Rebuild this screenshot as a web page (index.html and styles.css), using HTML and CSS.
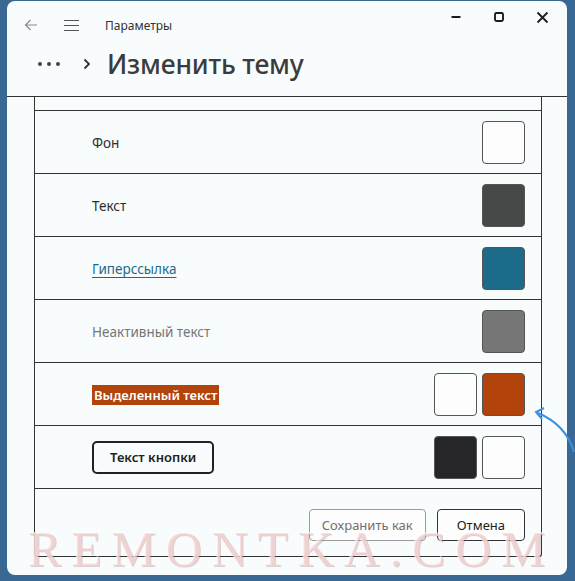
FILE: index.html
```html
<!DOCTYPE html>
<html lang="ru">
  <head>
    <meta charset="UTF-8" />
    <meta name="viewport" content="width=device-width, initial-scale=1.0" />
    <title>Параметры</title>
    <link rel="stylesheet" href="styles.css">
  </head>
  <body>
    <div class="window">
      <div class="titlebar">
        <div class="nav">
          <svg class="back" width="14" height="12" viewBox="0 0 14 12">
            <path d="M13 6H1.5M6.5 1L1.5 6l5 5" fill="none" stroke="#8a8a8a" stroke-width="1.2"/>
          </svg>
          <svg class="burger" width="15" height="11" viewBox="0 0 15 11">
            <path d="M0 .5h15M0 5.5h15M0 10.5h15" stroke="#555" stroke-width="1.1"/>
          </svg>
          <span class="app-name">Параметры</span>
        </div>
        <div class="controls">
          <svg width="12" height="12" viewBox="0 0 12 12">
            <path d="M1.5 6h9" stroke="#1c1c1c" stroke-width="2"/>
          </svg>
          <svg width="12" height="12" viewBox="0 0 12 12">
            <rect x="2" y="2" width="8" height="8" rx="1.5" fill="none" stroke="#1c1c1c" stroke-width="1.9"/>
          </svg>
          <svg width="13" height="13" viewBox="0 0 13 13">
            <path d="M1.5 1.5l10 10M11.5 1.5l-10 10" stroke="#1c1c1c" stroke-width="1.8"/>
          </svg>
        </div>
      </div>

      <div class="header">
        <svg class="more" width="24" height="6" viewBox="0 0 24 6">
          <circle cx="3" cy="3" r="2" fill="#444"/>
          <circle cx="12" cy="3" r="2" fill="#444"/>
          <circle cx="21" cy="3" r="2" fill="#444"/>
        </svg>
        <svg class="chevron" width="8" height="12" viewBox="0 0 8 12">
          <path d="M1.5 1.5L6 6l-4.5 4.5" fill="none" stroke="#333" stroke-width="1.8"/>
        </svg>
        <h1>Изменить тему</h1>
      </div>

      <div class="content">
        <div class="list">
          <div class="row partial"></div>

          <div class="row">
            <span class="label">Фон</span>
            <div class="swatches">
              <span class="swatch white"></span>
            </div>
          </div>

          <div class="row">
            <span class="label">Текст</span>
            <div class="swatches">
              <span class="swatch" style="background-color: #474848"></span>
            </div>
          </div>

          <div class="row">
            <span class="label link">Гиперссылка</span>
            <div class="swatches">
              <span class="swatch" style="background-color: #1d6b8a"></span>
            </div>
          </div>

          <div class="row">
            <span class="label inactive">Неактивный текст</span>
            <div class="swatches">
              <span class="swatch" style="background-color: #777777"></span>
            </div>
          </div>

          <div class="row">
            <span class="label selected">Выделенный текст</span>
            <div class="swatches">
              <span class="swatch white"></span>
              <span class="swatch" style="background-color: #b2430b"></span>
            </div>
          </div>

          <div class="row">
            <span class="label btn-sample">Текст кнопки</span>
            <div class="swatches">
              <span class="swatch" style="background-color: #262628"></span>
              <span class="swatch white"></span>
            </div>
          </div>

          <div class="footer">
            <button class="disabled">Сохранить как</button>
            <button>Отмена</button>
          </div>
        </div>
      </div>
    </div>

    <!-- annotation arrow -->
    <svg class="pointer" width="50" height="60" viewBox="0 0 50 60">
      <path d="M46 50C41 33 29 19 10 11" fill="none" stroke="#3d8fe3" stroke-width="2"/>
      <path d="M16 6L8 10l6 7" fill="none" stroke="#3d8fe3" stroke-width="2"/>
    </svg>

    <div class="watermark">REMONTKA.COM</div>
  </body>
</html>
```

FILE: styles.css
```css
body {
  margin: 0;
  padding: 1px 8px 6px 7px;
  background-color: #386893;
  font-family: "Noto Sans", "Open Sans", sans-serif;
  color: #2b2b2b;
}

.window {
  position: relative;
  height: 574px;
  background-color: #f9fcfd;
  border-radius: 8px;
  display: flex;
  flex-direction: column;
  overflow: hidden;
}

/* Title bar */
.titlebar {
  height: 48px;
  display: flex;
  justify-content: space-between;
  align-items: flex-start;
}

.titlebar .nav {
  display: flex;
  align-items: center;
  height: 48px;
  padding-left: 17px;
}

.titlebar .burger {
  margin-left: 26px;
}

.app-name {
  margin-left: 26px;
  font-size: 12px;
  color: #333;
}

.controls {
  display: flex;
  align-items: center;
  gap: 31px;
  height: 32px;
  padding-right: 18px;
}

/* Header */
.header {
  height: 29px;
  padding: 0 0 18px 30px;
  display: flex;
  align-items: center;
  border-bottom: 1px solid #333;
}

.header .more {
  margin-top: 1px;
}

.header .chevron {
  margin-left: 22px;
  margin-top: 1px;
}

.header h1 {
  margin: 0 0 0 16px;
  font-size: 26.5px;
  font-weight: 500;
  color: #3c3c3c;
  letter-spacing: -0.2px;
}

/* List */
.content {
  padding: 0 25px 0 27px;
  flex: 1;
}

.list {
  border-left: 1px solid #333;
  border-right: 1px solid #333;
  border-bottom: 1px solid #333;
  border-radius: 0 0 3px 3px;
}

.row {
  height: 62px;
  border-bottom: 1px solid #333;
  display: flex;
  align-items: center;
  justify-content: space-between;
  padding: 0 16px 0 57px;
}

.row.partial {
  height: 13px;
}

.label {
  margin-top: 2px;
  font-size: 13.5px;
  color: #2e2e2e;
}

.label.link {
  color: #1c6a8b;
  text-decoration: underline;
  text-underline-offset: 3px;
}

.label.inactive {
  color: #767676;
}

.label.selected {
  background-color: #b2430b;
  color: #fff;
  font-size: 13px;
  font-weight: 600;
  padding: 1px 2px;
}

.label.btn-sample {
  margin-top: 1px;
  font-size: 13px;
  font-weight: 600;
  color: #222;
  border: 2px solid #222;
  border-radius: 5px;
  padding: 5px 16px 6px;
}

.swatches {
  display: flex;
  gap: 5px;
}

.swatch {
  width: 41px;
  height: 41px;
  border: 1px solid #555;
  border-radius: 4px;
}

.swatch.white {
  background-color: #fdfdfd;
}

.footer {
  height: 67px;
  display: flex;
  justify-content: flex-end;
  gap: 11px;
  padding: 20px 16px 0 0;
  box-sizing: border-box;
}

.footer button {
  height: 32px;
  padding: 0 19px;
  font-family: "Noto Sans", "Open Sans", sans-serif;
  font-size: 13px;
  color: #1e1e1e;
  background-color: #fdfdfd;
  border: 1px solid #333;
  border-radius: 4px;
}

.footer button.disabled {
  color: #6f6f6f;
  border-color: #9a9a9a;
  padding: 0 12px;
}

/* Overlays */
.pointer {
  position: absolute;
  left: 528px;
  top: 402px;
}

.watermark {
  position: absolute;
  left: 28px;
  top: 524px;
  font-family: "Liberation Serif", serif;
  font-size: 50px;
  letter-spacing: 9.8px;
  color: rgba(246, 210, 210, 0.7);
  text-shadow: 1px 1px 0 rgba(150, 110, 110, 0.3), -1px -1px 0 rgba(255, 255, 255, 0.6);
  line-height: 1;
}
```
